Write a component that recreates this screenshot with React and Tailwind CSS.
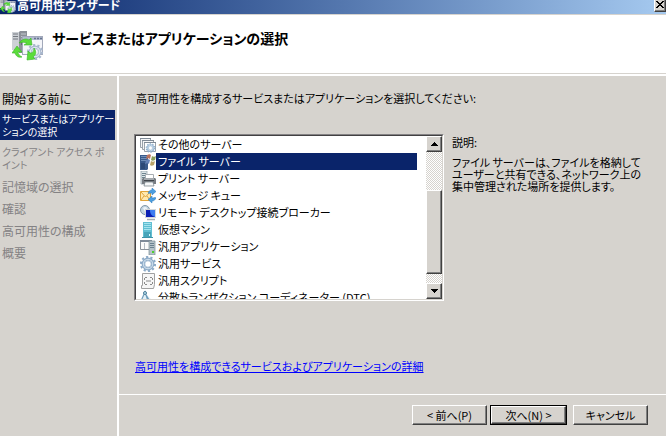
import React, { useState } from "react";

const raised =
  "border border-t-white border-l-white border-r-[#404040] border-b-[#404040] bg-[#d6d3ce] shadow-[inset_-1px_-1px_0_#808080]";

function Gear({ cx, cy, r, color = "#8fb0cf", fill = "#dbe6f1" }) {
  const dash = (Math.PI * 2 * r * 0.88) / 20;
  return (
    <g>
      <circle cx={cx} cy={cy} r={r * 0.88} fill="none" stroke={color} strokeWidth={r * 0.26} strokeDasharray={dash} />
      <circle cx={cx} cy={cy} r={r * 0.6} fill="none" stroke={color} strokeWidth={r * 0.4} />
      <circle cx={cx} cy={cy} r={r * 0.58} fill="none" stroke={fill} strokeWidth={r * 0.16} />
      <circle cx={cx} cy={cy} r={r * 0.4} fill="#fff" stroke={color} strokeWidth={r * 0.08} />
    </g>
  );
}

function ClusterIcon({ className }) {
  return (
    <svg className={className} viewBox="0 0 32 32" aria-hidden="true">
      <path d="M0 2h7v18H0z" fill="#cdd1d6" />
      <path d="M7 2l1-1h7v22H7z" fill="#8c9098" />
      <path d="M1 4h5M1 6.500h5M1 9h5" stroke="#747980" />
      <path d="M9 4h5M9 6.500h5M9 9h5" stroke="#c3c8ce" />
      <path d="M9 12h2v3H9z" fill="#686c73" />
      <rect x="10.500" y="6.500" width="20" height="18" fill="#f4f5f9" stroke="#a3a9ba" />
      <path d="M11 8.500h19" stroke="#b3bbcf" strokeWidth="3" />
      <path d="M22 8.500h2m1 0h2m1 0h2" stroke="#66748f" strokeWidth="1.500" />
      <Gear cx={23} cy={22} r={8} color="#a9b8ce" fill="#e2e8f1" />
      <path d="M7 13c3-4 7-5 10-3l2-2 1 7-8 0 3-2c-3-1-5-1-8 0z" fill="#5bdc3b" stroke="#3ab626" strokeWidth=".6" />
      <path d="M0 23l5-7 5 6-4 0c0 2 2 4 4 5-4 1-6-1-7-4z" fill="#5bdc3b" stroke="#3ab626" strokeWidth=".6" />
      <path d="M16 21l2 2c3 0 4-2 4-5 3 4 2 7-1 9l2 2-8 1z" fill="#5bdc3b" stroke="#3ab626" strokeWidth=".6" />
    </svg>
  );
}

const icons = {
  other: (
    <>
      <path d="M.5 1.500h10v9H.5z" fill="#f4f5f7" stroke="#9aa2ab" />
      <path d="M2.500 3.500h11v9h-11z" fill="#f4f5f7" stroke="#9aa2ab" />
      <path d="M4.500 5.500h11v9h-11z" fill="#fff" stroke="#9aa2ab" />
      <path d="M0 1.500h11M2 3.500h12M4 5.500h12" stroke="#7f8a96" />
      <Gear cx={10.5} cy={11} r={4.8} />
    </>
  ),
  file: (
    <>
      <path d="M0 1h8v14l-1 1H0z" fill="#3a5b8c" />
      <path d="M1 2.500h6M1 4.500h6M1 6.500h6" stroke="#7190b8" />
      <path d="M1 9h4v6H1z" fill="#2c4a78" />
      <path d="M7 1c2-1 3-1 4 0l-1 4c-1-1-2-1-4 0z" fill="#b8735f" />
      <path d="M12 2c1 1 3 1 4 0l-1 4c-2 1-3 1-4 0z" fill="#8a9f5c" />
      <path d="M6 6c2-1 3-1 4 0l-1 4c-1-1-2-1-4 0z" fill="#6583b8" />
      <path d="M11 7c1 1 3 1 4 0l-1 4c-2 1-3 1-4 0z" fill="#b8a36a" />
    </>
  ),
  print: (
    <>
      <path d="M1 0h6v13H1z" fill="#dce5e8" stroke="#8a9aa2" strokeWidth=".7" />
      <path d="M2 2.500h4M2 4.500h4M2 6.500h4" stroke="#6f858f" />
      <path d="M5.500 3.500h8v4h-8z" fill="#fff" stroke="#a7adb2" />
      <path d="M3 7h12l1 1v5H2V8z" fill="#777c82" />
      <path d="M4 8h10" stroke="#d2d6d9" />
      <path d="M4 9.500h10" stroke="#3f4449" />
      <path d="M5 11h8l1 4H4z" fill="#f5f7f8" stroke="#717b82" strokeWidth=".7" />
    </>
  ),
  queue: (
    <>
      <path d="M.5 3.500h10v9H.5z" fill="#ffe9b0" stroke="#e0a53c" />
      <path d="M1 4l4.500 5L10 4M1 12l3-4M10 12L7 8" fill="none" stroke="#e0a53c" />
      <path d="M8 5c1-2 2-3 4-3V0l4 3.500L12 7V5c-2 0-3 1-4 0z" fill="#4c9ee0" stroke="#2474b8" strokeWidth=".5" />
      <path d="M16 10c-1 2-2 3-4 3v2l-4-3.500L12 8v2c2 0 3-1 4 0z" fill="#4c9ee0" stroke="#2474b8" strokeWidth=".5" />
    </>
  ),
  remote: (
    <>
      <circle cx="5" cy="5" r="4.500" fill="#c3d5e2" stroke="#8198aa" />
      <path d="M3 3c2-2 4-1 4 1L5 7z" fill="#eef5fa" />
      <path d="M5.500 4.500h10v8h-10z" fill="#0a20b4" stroke="#d5d8da" />
      <path d="M10 5h5v7c-3-1-5-3-5-7z" fill="#3d7cf0" />
      <path d="M7 14.500h8" stroke="#a6acb2" strokeWidth="1.500" />
    </>
  ),
  vm: (
    <>
      <path d="M3 0h9v16H3z" fill="#62bfd2" />
      <path d="M4 1.500h7M4 3.500h7M4 5.500h7M4 7.500h7" stroke="#a5e3ee" />
      <path d="M4 10h7v5H4z" fill="#48a5ba" />
      <path d="M9 12h1v2H9z" fill="#d6fbff" />
      <path d="M2 15.500h11" stroke="#3f93a8" />
    </>
  ),
  app: (
    <>
      <path d="M.5 1.500h11v9H.5z" fill="#fafafa" stroke="#8b929a" />
      <path d="M0 2h12" stroke="#7e8a98" strokeWidth="2" />
      <path d="M4.500 4v6" stroke="#b5bcc4" />
      <path d="M9 2h6v14H9z" fill="#b6c3ca" stroke="#7b8d97" strokeWidth=".7" />
      <path d="M10 4.500h4M10 6.500h4M10 8.500h4" stroke="#6b8290" />
      <path d="M12 12h2v2h-2z" fill="#4dd030" />
    </>
  ),
  service: <Gear cx={8} cy={8} r={8} color="#8dabc8" fill="#c9dbea" />,
  script: (
    <>
      <path d="M2.500.5h12v11l-1 4h-12v-3h1z" fill="#f6f6f6" stroke="#a0a0a0" />
      <path d="M5 4.500h2M10 4.500h2M6 8h5M5 11.500h2M10 11.500h2M4.500 5v2M12.500 5v2M4.500 9v2M12.500 9v2" stroke="#8a8a8a" />
    </>
  ),
  dtc: (
    <>
      <path d="M5 2L1 11h7zM5 3l4 7 4 1" fill="#e3f0f6" stroke="#6f9dbb" strokeWidth="1.200" />
      <circle cx="5" cy="3" r="1.500" fill="#b7ddeb" stroke="#4d7e9a" />
      <path d="M1 11h4v4H1zM10 10h5v4h-5z" fill="#8fc0da" stroke="#4d7e9a" strokeWidth=".7" />
    </>
  ),
};

const services = [
  ["other", "その他のサーバー"],
  ["file", "ファイル サーバー"],
  ["print", "プリント サーバー"],
  ["queue", "メッセージ キュー"],
  ["remote", "リモート デスクトップ接続ブローカー"],
  ["vm", "仮想マシン"],
  ["app", "汎用アプリケーション"],
  ["service", "汎用サービス"],
  ["script", "汎用スクリプト"],
  ["dtc", "分散トランザクション コーディネーター (DTC)"],
];

const steps = [
  ["開始する前に"],
  ["サービスまたはアプリケー", "ションの選択"],
  ["クライアント アクセス ポ", "イント"],
  ["記憶域の選択"],
  ["確認"],
  ["高可用性の構成"],
  ["概要"],
];

function Lines({ lines }) {
  return lines.map((line) => (
    <span key={line} className="block">{line}</span>
  ));
}

function ScrollButton({ label, path }) {
  return (
    <button aria-label={label} className={`flex h-4 w-4 shrink-0 items-center justify-center ${raised}`}>
      <svg className="h-1 w-[7px]" viewBox="0 0 7 4" shapeRendering="crispEdges" aria-hidden="true">
        <path d={path} />
      </svg>
    </button>
  );
}

export default function App() {
  const [selected, setSelected] = useState("file");
  return (
    <div className="flex min-h-screen flex-col overflow-hidden whitespace-nowrap bg-[#d6d3ce] font-['Noto_Sans_CJK_JP',sans-serif] text-[11px] leading-[12px] text-black [font-feature-settings:'palt']">
      <div className="flex h-[14px] items-end justify-between overflow-hidden bg-linear-to-r from-[#0a246a] to-[#a6caf0] text-white">
        <div className="flex items-end">
          <ClusterIcon className="h-4 w-4" />
          <span className="pb-[3px] pl-px text-[12px] font-bold">高可用性ウィザード</span>
        </div>
        <button aria-label="閉じる" className={`mb-[2px] flex h-[14px] w-3 items-end justify-center pb-[3px] ${raised}`}>
          <svg className="h-[7px] w-2 shrink-0" viewBox="0 0 8 7" shapeRendering="crispEdges" aria-hidden="true">
            <path d="M0 0h2v1h1v1h2V1h1V0h2v1H7v1H6v1H5v1h1v1h1v1h1v1H6V6H5V5H3v1H2v1H0V6h1V5h1V4h1V3H2V2H1V1H0z" />
          </svg>
        </button>
      </div>
      <header className="flex h-[62px] items-start gap-2 border-t border-b-2 border-t-[#d6d3ce] border-b-white bg-white pl-3 shadow-[inset_0_-1px_0_#d6d3ce]">
        <ClusterIcon className="mt-[15px] h-8 w-8" />
        <h1 className="mt-4 text-[14px] leading-[14px] font-bold">サービスまたはアプリケーションの選択</h1>
      </header>

      <div className="flex flex-1">
        <nav className="w-[119px] shrink-0 border-r-2 border-white pt-3 pr-[2px] leading-[13px]">
          <ol className="flex flex-col">
            {steps.map((lines, i) => (
              <li
                key={lines[0]}
                aria-current={i === 1 ? "step" : undefined}
                className={`px-[2px] ${lines.length > 1 ? "text-[10px]" : "text-[12px]"} ${
                  i === 1 ? "bg-[#0a246a] py-[2px] text-white" : i === 0 ? "pt-1 pb-[5px]" : "pt-[5px] pb-1 text-[#848284]"
                }`}
              >
                <Lines lines={lines} />
              </li>
            ))}
          </ol>
        </nav>

        <div className="flex min-w-0 flex-1 flex-col">
          <main className="flex-1 pt-4 pl-[15px]">
            <p id="prompt" className="pl-[2px]">高可用性を構成するサービスまたはアプリケーションを選択してください:</p>
            <div className="mt-[30px] flex gap-2">
              <div className="flex h-[167px] w-[310px] shrink-0 border border-t-[#848284] border-r-white border-b-white border-l-[#848284] bg-white">
                <div className="flex min-w-0 flex-1 border border-t-[#424142] border-r-[#d6d3ce] border-b-[#d6d3ce] border-l-[#424142]">
                  <ul role="listbox" aria-labelledby="prompt" className="min-w-0 flex-1 overflow-hidden pr-[9px] pl-1">
                    {services.map(([id, name]) => (
                      <li
                        key={id}
                        role="option"
                        aria-selected={selected === id}
                        onClick={() => setSelected(id)}
                        className="flex h-[17px] items-center"
                      >
                        <svg className="h-4 w-4 shrink-0" viewBox="0 0 16 16" aria-hidden="true">{icons[id]}</svg>
                        <span className={`flex h-full flex-1 items-center px-[2px] pb-px ${selected === id ? "bg-[#0a246a] text-white" : ""}`}>
                          {name}
                        </span>
                      </li>
                    ))}
                  </ul>
                  <div className="flex w-4 flex-col bg-[conic-gradient(#fff_25%,#d6d3ce_0_50%,#fff_0_75%,#d6d3ce_0)] bg-size-[2px_2px]">
                    <ScrollButton label="上へスクロール" path="M3 0h1v1h1v1h1v1h1v1H0V3h1V2h1V1h1z" />
                    <div className="flex flex-1 flex-col pt-[38px] pb-[9px]">
                      <div className={`flex-1 ${raised}`} />
                    </div>
                    <ScrollButton label="下へスクロール" path="M0 0h7v1H6v1H5v1H4v1H3V3H2V2H1V1H0z" />
                  </div>
                </div>
              </div>
              <section className="pt-[2px]">
                <h2>説明:</h2>
                <p className="mt-2">
                  <Lines lines={["ファイル サーバーは、ファイルを格納して", "ユーザーと共有できる、ネットワーク上の", "集中管理された場所を提供します。"]} />
                </p>
              </section>
            </div>
            <a href="#details" className="mt-[59px] ml-px inline-block text-[#0000ff] underline">
              高可用性を構成できるサービスおよびアプリケーションの詳細
            </a>
          </main>
          <footer className="flex h-[42px] items-start justify-end border-t border-white pt-[10px] pr-[18px]">
            <button className={`h-5 w-[75px] ${raised}`}>&lt; 前へ(P)</button>
            <button className="ml-[3px] h-5 w-[77px] border border-black">
              <span className={`flex h-full items-center justify-center ${raised}`}>次へ(N) &gt;</span>
            </button>
            <button className={`ml-[6px] h-5 w-[75px] ${raised}`}>キャンセル</button>
          </footer>
        </div>
      </div>
    </div>
  );
}
